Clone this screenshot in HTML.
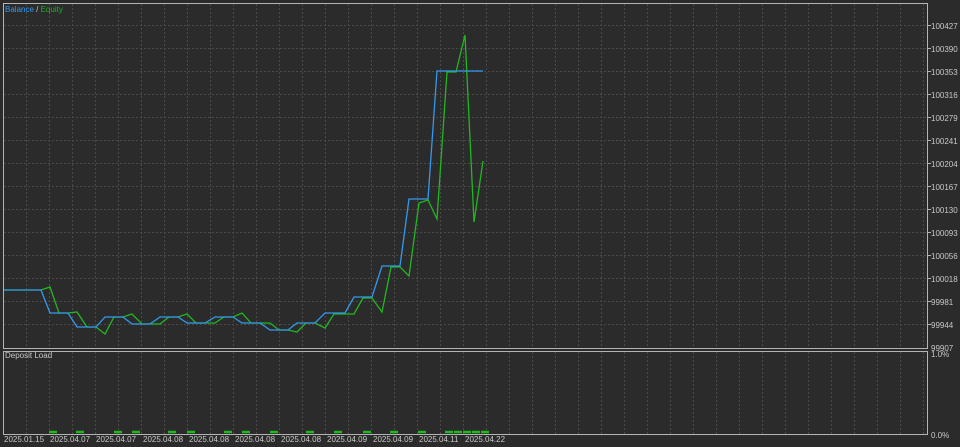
<!DOCTYPE html>
<html><head><meta charset="utf-8"><style>
html,body{margin:0;padding:0;background:#2b2b2b;width:960px;height:447px;overflow:hidden}
svg{display:block}
text{font-family:"Liberation Sans",sans-serif;font-size:8px;fill:#c8c8c8}
</style></head><body>
<svg width="960" height="447" viewBox="0 0 960 447" xmlns="http://www.w3.org/2000/svg">
<rect width="960" height="447" fill="#2b2b2b"/>
<g stroke="#4a4a4a" stroke-width="1" stroke-dasharray="2,2" fill="none">
<path d="M26.5 4V348M49.5 4V348M72.5 4V348M95.5 4V348M118.5 4V348M141.5 4V348M164.5 4V348M187.5 4V348M210.5 4V348M233.5 4V348M256.5 4V348M279.5 4V348M302.5 4V348M325.5 4V348M348.5 4V348M371.5 4V348M394.5 4V348M417.5 4V348M440.5 4V348M463.5 4V348M486.5 4V348M509.5 4V348M532.5 4V348M555.5 4V348M578.5 4V348M601.5 4V348M624.5 4V348M647.5 4V348M670.5 4V348M693.5 4V348M716.5 4V348M739.5 4V348M762.5 4V348M785.5 4V348M808.5 4V348M831.5 4V348M854.5 4V348M877.5 4V348M900.5 4V348M923.5 4V348"/>
<path d="M26.5 352V434M49.5 352V434M72.5 352V434M95.5 352V434M118.5 352V434M141.5 352V434M164.5 352V434M187.5 352V434M210.5 352V434M233.5 352V434M256.5 352V434M279.5 352V434M302.5 352V434M325.5 352V434M348.5 352V434M371.5 352V434M394.5 352V434M417.5 352V434M440.5 352V434M463.5 352V434M486.5 352V434M509.5 352V434M532.5 352V434M555.5 352V434M578.5 352V434M601.5 352V434M624.5 352V434M647.5 352V434M670.5 352V434M693.5 352V434M716.5 352V434M739.5 352V434M762.5 352V434M785.5 352V434M808.5 352V434M831.5 352V434M854.5 352V434M877.5 352V434M900.5 352V434M923.5 352V434"/>
<path d="M4 25.5H927M4 48.5H927M4 71.5H927M4 94.5H927M4 117.5H927M4 140.5H927M4 163.5H927M4 186.5H927M4 209.5H927M4 232.5H927M4 255.5H927M4 278.5H927M4 301.5H927M4 324.5H927"/>
</g>
<g stroke="#b4b4b4" stroke-width="1" fill="none">
<rect x="3.5" y="3.5" width="924" height="345"/>
<rect x="3.5" y="351.5" width="924" height="83"/>
</g>
<g stroke="#b4b4b4"><path d="M928 25.5h3M928 48.5h3M928 71.5h3M928 94.5h3M928 117.5h3M928 140.5h3M928 163.5h3M928 186.5h3M928 209.5h3M928 232.5h3M928 255.5h3M928 278.5h3M928 301.5h3M928 324.5h3"/></g>
<polyline fill="none" stroke="#1fb81f" stroke-width="1.3" points="4,290 41,290 50,287 59,313 68,313 77,312 87,327 96,327 105,334 114,317 123,317 132,314 142,324 150,324 160,324 169,317 178,317 187,314 196,323 205,323 215,323 224,317 233,317 242,313 251,323 260,323 270,323 279,330 288,330 297,332 306,323 315,323 325,328 334,314 342,314 354,314 363,298 372,298 382,312 391,267 400,267 409,276 419,203 428,200 437,219 447,72 456,72 465,35 474,222 483,161"/>
<polyline fill="none" stroke="#3399ee" stroke-width="1.3" points="4,290 41,290 50,313 68,313 77,327 96,327 105,317 123,317 132,324 150,324 160,317 178,317 187,323 205,323 215,317 233,317 242,323 260,323 270,330 288,330 297,323 315,323 325,313 345,313 354,297 372,297 382,266 400,266 409,199 428,199 437,71 483,71"/>
<g stroke="#1fb81f" stroke-width="2.5">
<path d="M49 432h8M76 432h8M114 432h8M132 432h8M168 432h8M187 432h8M224 432h8M242 432h8M270 432h8M306 432h8M334 432h8M363 432h8M390 432h8M418 432h8M445 432h8M454 432h8M463 432h8M472 432h8M481 432h8"/>
</g>
<text x="5" y="12"><tspan fill="#3399ee">Balance</tspan><tspan fill="#c8c8c8"> / </tspan><tspan fill="#1fb01f">Equity</tspan></text>
<text x="5" y="358">Deposit Load</text>
<g>
<text x="931" y="29">100427</text>
<text x="931" y="52">100390</text>
<text x="931" y="75">100353</text>
<text x="931" y="98">100316</text>
<text x="931" y="121">100279</text>
<text x="931" y="144">100241</text>
<text x="931" y="167">100204</text>
<text x="931" y="190">100167</text>
<text x="931" y="213">100130</text>
<text x="931" y="236">100093</text>
<text x="931" y="259">100056</text>
<text x="931" y="282">100018</text>
<text x="931" y="305">99981</text>
<text x="931" y="328">99944</text>
<text x="931" y="351">99907</text>
<text x="931" y="357">1.0%</text>
<text x="931" y="438">0.0%</text>
</g>
<g>
<text x="4" y="442">2025.01.15</text>
<text x="50" y="442">2025.04.07</text>
<text x="96" y="442">2025.04.07</text>
<text x="143" y="442">2025.04.08</text>
<text x="189" y="442">2025.04.08</text>
<text x="235" y="442">2025.04.08</text>
<text x="281" y="442">2025.04.08</text>
<text x="327" y="442">2025.04.09</text>
<text x="373" y="442">2025.04.09</text>
<text x="419" y="442">2025.04.11</text>
<text x="465" y="442">2025.04.22</text>
</g>
</svg>
</body></html>
